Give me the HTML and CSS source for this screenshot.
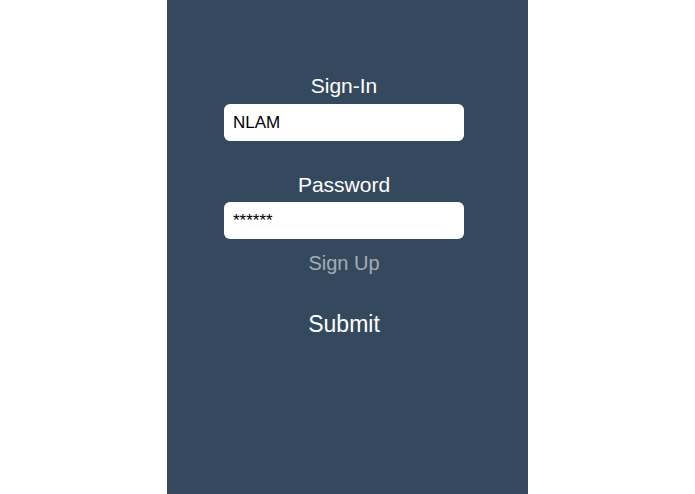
FILE: index.html
```html
<!DOCTYPE html>
<html lang="en">
<head>
    <meta charset="UTF-8">
    <meta name="viewport" content="width=device-width, initial-scale=1.0">
    <title>Sign-In</title>
    <link rel="stylesheet" href="styles.css">
</head>
<body>
    <div class="panel">
        <form class="login" onsubmit="return false;">
            <label class="field-label" for="user">Sign-In</label>
            <input class="field" id="user" type="text" value="NLAM">

            <label class="field-label second" for="pass">Password</label>
            <input class="field" id="pass" type="text" value="******">

            <a class="signup" href="#">Sign Up</a>
            <button class="submit" type="submit">Submit</button>
        </form>
    </div>
</body>
</html>
```

FILE: styles.css
```css
html, body {
    margin: 0;
    padding: 0;
    height: 100%;
    background-color: #fff;
    font-family: "Liberation Sans", Arial, sans-serif;
}
.panel {
    width: 361px;
    height: 100%;
    margin-left: 167px;
    background-color: #35495e;
}
.login {
    display: flex;
    flex-direction: column;
    align-items: center;
    padding: 74px 7px 0 0;
}
.field-label {
    color: #fff;
    font-size: 21px;
    line-height: 24px;
    margin-bottom: 6px;
}
.field-label.second {
    margin-top: 32px;
    margin-bottom: 5px;
}
.field {
    box-sizing: border-box;
    width: 240px;
    height: 37px;
    padding: 0 9px;
    border: none;
    border-radius: 6px;
    background: #fff;
    color: #000;
    font-family: "Liberation Sans", Arial, sans-serif;
    font-size: 17px;
    outline: none;
}
.signup {
    margin-top: 12px;
    color: #a4acb6;
    font-size: 20px;
    line-height: 24px;
    text-decoration: none;
}
.submit {
    margin-top: 35px;
    padding: 0;
    border: none;
    background: none;
    color: #fff;
    font-family: "Liberation Sans", Arial, sans-serif;
    font-size: 23px;
    line-height: 28px;
    cursor: pointer;
}
```
